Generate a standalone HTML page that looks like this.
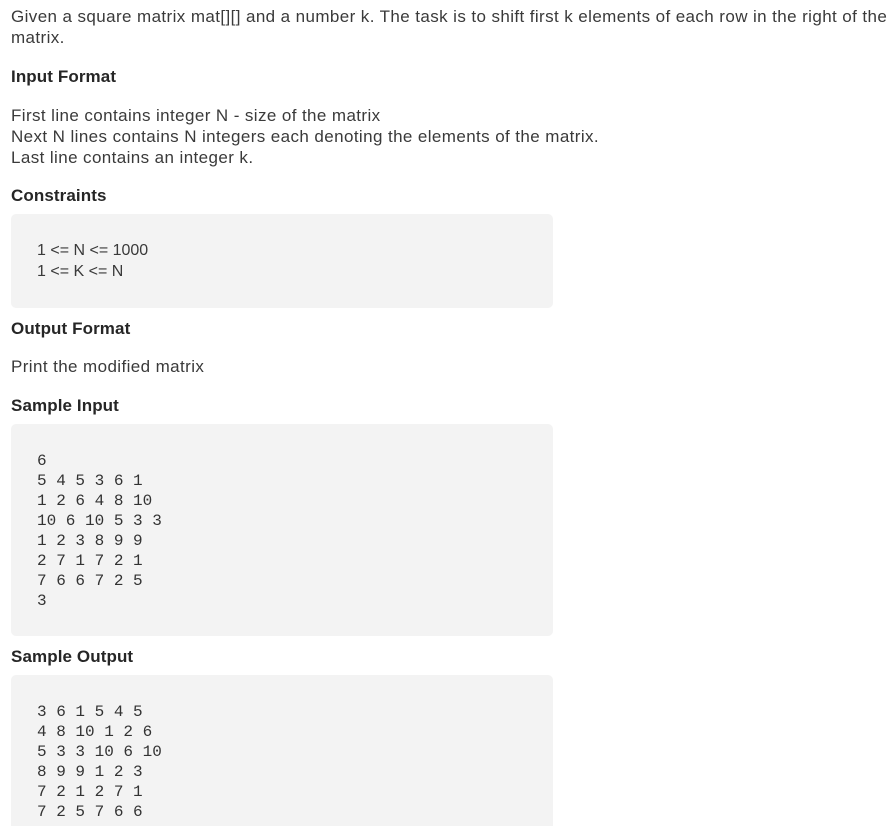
<!DOCTYPE html>
<html><head><meta charset="utf-8"><style>
html,body{margin:0;width:896px;height:826px;overflow:hidden;}
body{background:#fff;font-family:"Liberation Sans",sans-serif;color:#3a3a3a;font-size:17px;}
.a{position:absolute;left:11px;line-height:21px;white-space:nowrap;letter-spacing:0.4px}
.h{font-weight:bold;color:#262626;letter-spacing:0.1px}
.box{position:absolute;left:11px;width:542px;background:#f3f3f3;border-radius:5px}
.m{position:absolute;left:37px;font-family:"Liberation Mono",monospace;font-size:16px;line-height:20px;white-space:pre;color:#333}
</style></head><body>
<div class="a" style="top:6px;white-space:normal;width:885px">Given a square matrix mat[][] and a number k. The task is to shift first k elements of each row in the right of the matrix.</div>
<div class="a h" style="top:66px">Input Format</div>
<div class="a" style="top:105px">First line contains integer N - size of the matrix<br>Next N lines contains N integers each denoting the elements of the matrix.<br>Last line contains an integer k.</div>
<div class="a h" style="top:185px">Constraints</div>
<div class="box" style="top:214px;height:94px"></div>
<div class="a" style="top:240px;left:37px;letter-spacing:0;font-size:16px">1 &lt;= N &lt;= 1000<br>1 &lt;= K &lt;= N</div>
<div class="a h" style="top:318px">Output Format</div>
<div class="a" style="top:356px">Print the modified matrix</div>
<div class="a h" style="top:395px">Sample Input</div>
<div class="box" style="top:424px;height:212px"></div>
<div class="m" style="top:451px">6
5 4 5 3 6 1
1 2 6 4 8 10
10 6 10 5 3 3
1 2 3 8 9 9
2 7 1 7 2 1
7 6 6 7 2 5
3</div>
<div class="a h" style="top:646px">Sample Output</div>
<div class="box" style="top:675px;height:151px;border-radius:5px 5px 0 0"></div>
<div class="m" style="top:702px">3 6 1 5 4 5
4 8 10 1 2 6
5 3 3 10 6 10
8 9 9 1 2 3
7 2 1 2 7 1
7 2 5 7 6 6</div>
</body></html>
